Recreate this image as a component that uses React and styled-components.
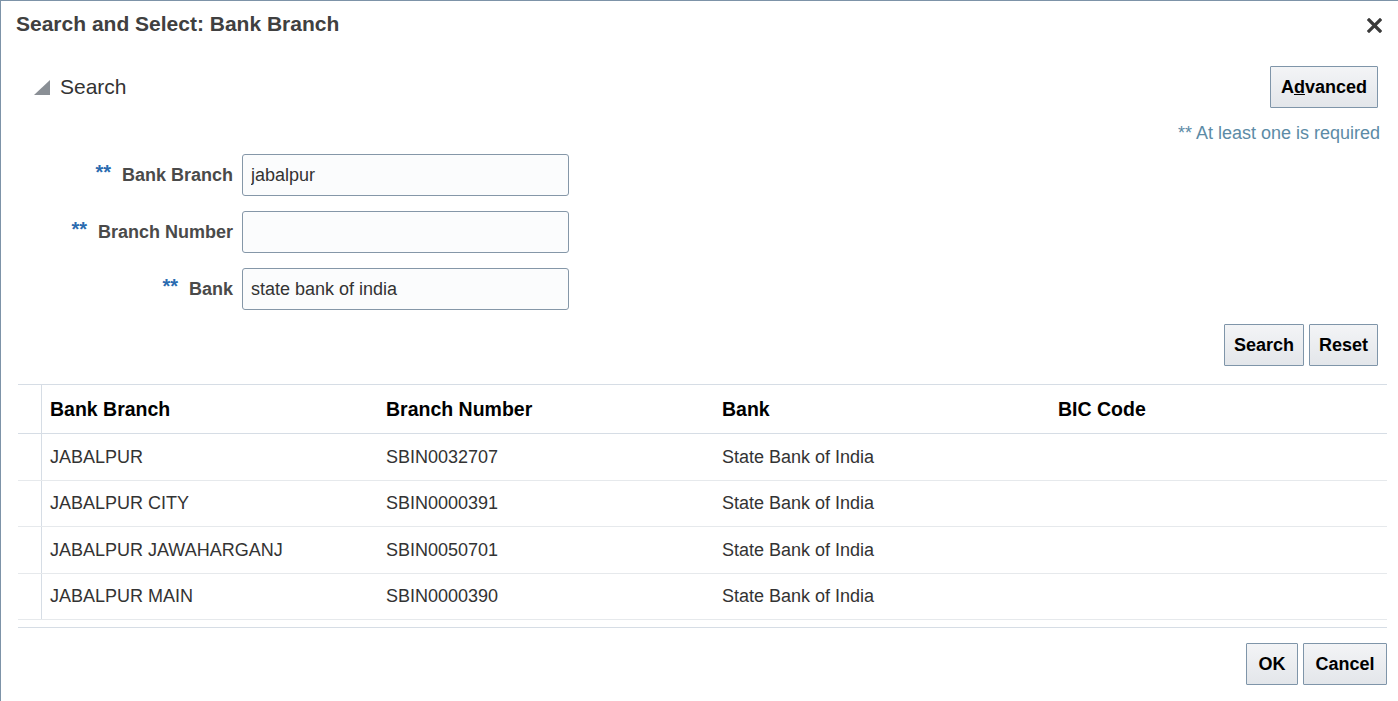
import React from "react";
import styled, { createGlobalStyle } from "styled-components";

const GlobalStyle = createGlobalStyle`
  html, body {
    margin: 0;
    padding: 0;
    background: #fff;
    overflow: hidden;
  }
  body {
    font-family: "Liberation Sans", Arial, sans-serif;
  }
`;

const Dialog = styled.div`
  width: 1400px;
  height: 701px;
  box-sizing: border-box;
  border-top: 1px solid #7d93a8;
  border-left: 1px solid #7d93a8;
  border-right: 1px solid #7d93a8;
  background: #fff;
  display: flex;
  flex-direction: column;
`;

const TitleBar = styled.div`
  display: flex;
  justify-content: space-between;
  align-items: center;
  height: 46px;
  padding: 0 16px 0 15px;
`;

const Title = styled.h1`
  margin: 0;
  font-size: 21px;
  font-weight: bold;
  color: #404040;
`;

const Close = styled.button`
  border: none;
  background: none;
  padding: 0;
  width: 18px;
  height: 18px;
  display: flex;
  align-items: center;
  justify-content: center;
  margin-top: 2px;
`;

const Body = styled.div`
  padding: 0 21px 0 17px;
  display: flex;
  flex-direction: column;
`;

const SearchHeader = styled.div`
  display: flex;
  justify-content: space-between;
  align-items: flex-start;
  padding-top: 19px;
`;

const Disclosure = styled.div`
  display: flex;
  align-items: center;
  gap: 10px;
  padding-left: 16px;
  padding-top: 9px;
  font-size: 21px;
  color: #333;
`;

const Button = styled.button`
  font-family: "Liberation Sans", Arial, sans-serif;
  font-size: 18px;
  font-weight: bold;
  color: #000;
  height: 42px;
  padding: 0 ${({ pad }) => pad ?? 9}px;
  border: 1px solid #7f95a9;
  border-radius: 1px;
  background: linear-gradient(#f3f4f6, #e3e6ea);
  cursor: pointer;

  u {
    text-decoration: underline;
  }
`;

const Required = styled.div`
  align-self: flex-end;
  margin-top: 15px;
  font-size: 18px;
  color: #5c8ba6;
  margin-right: -2px;
`;

const Form = styled.div`
  display: flex;
  flex-direction: column;
  gap: 15px;
  margin-top: 10px;
`;

const FieldRow = styled.div`
  display: grid;
  grid-template-columns: 215px 327px;
  column-gap: 9px;
  align-items: center;
`;

const Label = styled.label`
  display: flex;
  justify-content: flex-end;
  align-items: center;
  gap: 11px;
  font-size: 18px;
  font-weight: bold;
  color: #4a4a4a;
`;

const Stars = styled.span`
  color: #2a6bb0;
  font-size: 20px;
  font-weight: bold;
  position: relative;
  top: -3px;
`;

const Input = styled.input`
  box-sizing: border-box;
  height: 42px;
  width: 327px;
  border: 1px solid #8597a8;
  border-radius: 3px;
  background: #fbfcfd;
  padding: 0 8px;
  font-family: "Liberation Sans", Arial, sans-serif;
  font-size: 18px;
  color: #333;
  outline: none;
`;

const ButtonRow = styled.div`
  display: flex;
  justify-content: flex-end;
  gap: 5px;
  margin-top: 14px;
`;

const Table = styled.div`
  margin-top: 18px;
  border-top: 1px solid #d6dde5;
  border-bottom: 1px solid #d6dde5;
  padding-bottom: 7px;
  margin-right: -9px;
`;

const Row = styled.div`
  display: grid;
  grid-template-columns: 24px 336px 336px 336px 1fr;
  height: ${({ h }) => h}px;
  border-bottom: 1px solid ${({ header }) => (header ? "#d6dde5" : "#e6e9ec")};
  align-items: center;
  font-size: ${({ header }) => (header ? 19.5 : 18)}px;
  font-weight: ${({ header }) => (header ? "bold" : "normal")};
  color: ${({ header }) => (header ? "#000" : "#333")};
`;

const RowHead = styled.div`
  height: 100%;
  border-right: 1px solid #d6dde5;
`;

const Cell = styled.div`
  padding-left: 8px;
  white-space: nowrap;
`;

const Footer = styled.div`
  display: flex;
  justify-content: flex-end;
  gap: 5px;
  margin-top: 15px;
  margin-right: -9px;
`;

const Triangle = () => (
  <svg width="16" height="15" viewBox="0 0 16 15">
    <polygon points="16,0 16,15 0,15" fill="#8a8f95" />
  </svg>
);

const CloseIcon = () => (
  <svg width="15" height="15" viewBox="0 0 15 15">
    <path d="M2 2 L13 13 M13 2 L2 13" stroke="#3a3a3a" strokeWidth="3.2" strokeLinecap="square" />
  </svg>
);

const fields = [
  { label: "Bank Branch", value: "jabalpur" },
  { label: "Branch Number", value: "" },
  { label: "Bank", value: "state bank of india" },
];

const rows = [
  ["JABALPUR", "SBIN0032707", "State Bank of India", ""],
  ["JABALPUR CITY", "SBIN0000391", "State Bank of India", ""],
  ["JABALPUR JAWAHARGANJ", "SBIN0050701", "State Bank of India", ""],
  ["JABALPUR MAIN", "SBIN0000390", "State Bank of India", ""],
];

export default function App() {
  return (
    <Dialog>
      <GlobalStyle />
      <TitleBar>
        <Title>Search and Select: Bank Branch</Title>
        <Close aria-label="Close">
          <CloseIcon />
        </Close>
      </TitleBar>
      <Body>
        <SearchHeader>
          <Disclosure>
            <Triangle />
            <span>Search</span>
          </Disclosure>
          <Button pad={10}>
            A<u>d</u>vanced
          </Button>
        </SearchHeader>
        <Required>** At least one is required</Required>
        <Form>
          {fields.map((f) => (
            <FieldRow key={f.label}>
              <Label>
                <Stars>**</Stars>
                {f.label}
              </Label>
              <Input defaultValue={f.value} />
            </FieldRow>
          ))}
        </Form>
        <ButtonRow>
          <Button>Search</Button>
          <Button>Reset</Button>
        </ButtonRow>
        <Table>
          <Row header h={48}>
            <RowHead />
            <Cell>Bank Branch</Cell>
            <Cell>Branch Number</Cell>
            <Cell>Bank</Cell>
            <Cell>BIC Code</Cell>
          </Row>
          {rows.map((r, idx) => (
            <Row key={r[0]} h={idx % 2 === 0 ? 46 : 45}>
              <RowHead />
              {r.map((c, i) => (
                <Cell key={i}>{c}</Cell>
              ))}
            </Row>
          ))}
        </Table>
        <Footer>
          <Button pad={11.5}>OK</Button>
          <Button pad={11.5}>Cancel</Button>
        </Footer>
      </Body>
    </Dialog>
  );
}
